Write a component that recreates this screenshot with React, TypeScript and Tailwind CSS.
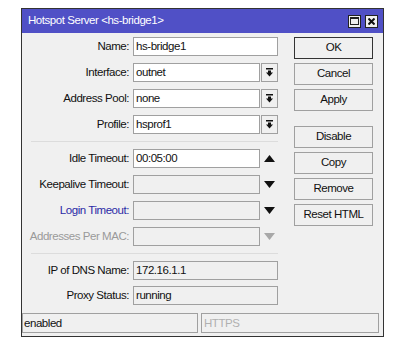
import React from 'react';

const font = { fontFamily: '"Liberation Sans", Arial, sans-serif' };

function DropBtn() {
  return (
    <div className="w-[17px] h-[19px] border border-[#a0a0a0] bg-[#f0f0f0] flex items-center justify-center">
      <svg width="9" height="9" viewBox="0 0 9 9">
        <rect x="1" y="0" width="7" height="1.5" fill="#111" />
        <path d="M3 2.5 H6 V4.5 H8 L4.5 8.5 L1 4.5 H3 Z" fill="#111" />
      </svg>
    </div>
  );
}

function Arrow({ up, dim }: { up?: boolean; dim?: boolean }) {
  return (
    <div className="w-[17px] h-[19px] flex items-center justify-center">
      <svg width="11" height="7" viewBox="0 0 11 7">
        {up ? (
          <path d="M0 7 L5.5 0 L11 7 Z" fill="#111" />
        ) : (
          <path d="M0 0 L11 0 L5.5 7 Z" fill={dim ? '#a8a8a8' : '#111'} />
        )}
      </svg>
    </div>
  );
}

function Row({
  label,
  value,
  white,
  labelClass = 'text-[#111]',
  right,
}: {
  label: string;
  value?: string;
  white?: boolean;
  labelClass?: string;
  right?: React.ReactNode;
}) {
  return (
    <div className="flex items-center h-[19px]">
      <div className={`w-[111px] text-right pr-[4px] whitespace-nowrap ${labelClass}`}>{label}</div>
      <div className="flex items-center gap-[1px] w-[145px]">
        <div
          className={`flex-1 h-[19px] border border-[#a0a0a0] px-[2px] leading-[17px] text-[#111] ${
            white ? 'bg-white' : 'bg-[#f0f0f0]'
          }`}
        >
          {value}
        </div>
        {right}
      </div>
    </div>
  );
}

function Btn({ children, def }: { children: React.ReactNode; def?: boolean }) {
  return (
    <div
      className={`h-[22px] w-[79px] flex items-center justify-center bg-[#f0f0f0] text-[#111] border ${
        def ? 'border-[#333]' : 'border-[#a0a0a0]'
      }`}
    >
      {children}
    </div>
  );
}

export default function App() {
  return (
    <div className="w-[420px] h-[355px] bg-white pt-[8px] pl-[21px]" style={font}>
      <div className="w-[363px] h-[329px] border border-[#333] bg-[#f0f0f0] flex flex-col text-[11.5px] tracking-[-0.45px]">
        {/* Title bar */}
        <div className="h-[24px] bg-[#5050c6] flex items-center justify-between pl-[6px] pr-[5px]">
          <span className="text-white">Hotspot Server &lt;hs-bridge1&gt;</span>
          <div className="flex gap-[4px]">
            <div className="w-[13px] h-[13px] bg-[#f0f0f0] border border-[#222] flex items-center justify-center">
              <div className="w-[9px] h-[8px] border border-[#222] border-t-2" />
            </div>
            <div className="w-[13px] h-[13px] bg-[#f0f0f0] border border-[#222] flex items-center justify-center">
              <svg width="7" height="7" viewBox="0 0 7 7">
                <path d="M0.5 0.5 L6.5 6.5 M6.5 0.5 L0.5 6.5" stroke="#111" strokeWidth="2" />
              </svg>
            </div>
          </div>
        </div>

        {/* Body */}
        <div className="flex flex-1 pt-[4px]">
          <div className="flex flex-col w-[258px]">
            <div className="flex flex-col gap-[7px]">
              <Row label="Name:" value="hs-bridge1" white />
              <Row label="Interface:" value="outnet" white right={<DropBtn />} />
              <Row label="Address Pool:" value="none" white right={<DropBtn />} />
              <Row label="Profile:" value="hsprof1" white right={<DropBtn />} />
            </div>
            <div className="h-px bg-[#dcdcdc] ml-[9px] mr-[2px] mt-[7px] mb-[7px]" />
            <div className="flex flex-col gap-[7px]">
              <Row label="Idle Timeout:" value="00:05:00" white right={<Arrow up />} />
              <Row label="Keepalive Timeout:" right={<Arrow />} />
              <Row label="Login Timeout:" labelClass="text-[#2a2aa6]" right={<Arrow />} />
              <Row label="Addresses Per MAC:" labelClass="text-[#9a9a9a]" right={<Arrow dim />} />
            </div>
            <div className="h-px bg-[#dcdcdc] ml-[9px] mr-[2px] mt-[7px] mb-[7px]" />
            <div className="flex flex-col gap-[6px]">
              <Row label="IP of DNS Name:" value="172.16.1.1" />
              <Row label="Proxy Status:" value="running" />
            </div>
          </div>
          <div className="flex flex-col gap-[4px] ml-[14px]">
            <Btn def>OK</Btn>
            <Btn>Cancel</Btn>
            <Btn>Apply</Btn>
            <div className="h-[7px]" />
            <Btn>Disable</Btn>
            <Btn>Copy</Btn>
            <Btn>Remove</Btn>
            <Btn>Reset HTML</Btn>
          </div>
        </div>

        {/* Status bar */}
        <div className="flex h-[20px] gap-[3px] mb-[3px] pr-[4px]">
          <div className="w-[176px] border border-[#a0a0a0] px-[1px] leading-[18px] text-[#111]">enabled</div>
          <div className="flex-1 border border-[#a0a0a0] px-[2px] leading-[18px] text-[#b0b0b0]">HTTPS</div>
        </div>
      </div>
    </div>
  );
}
